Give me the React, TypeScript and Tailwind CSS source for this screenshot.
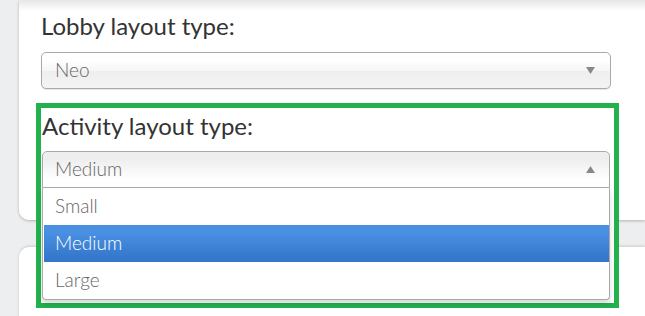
import React from 'react'

type Opt = { label: string; active?: boolean }

const OPTIONS: Opt[] = [{ label: 'Small' }, { label: 'Medium', active: true }, { label: 'Large' }]

function Caret({ up }: { up?: boolean }) {
  return (
    <svg width="9" height="7" viewBox="0 0 9 7" className="shrink-0">
      <polygon points={up ? '0,7 9,7 4.5,0' : '0,0 9,0 4.5,7'} fill="#888" />
    </svg>
  )
}

export default function App() {
  return (
    <div className="h-[316px] w-[645px] overflow-hidden bg-[#eceeef] font-['Lato','Open_Sans',sans-serif]">
      <div className="ml-[19px] h-[220px] rounded-bl-[10px] bg-[linear-gradient(#e6e6e6,#fff_11px)] pl-[22px] pt-[12px] shadow-[0_1px_3px_rgba(0,0,0,0.25)]">
        <div className="text-[24px] leading-[28px] text-[#333]">Lobby layout type:</div>

        <div className="mt-[12px] flex h-[37px] w-[570px] items-center justify-between rounded-[5px] border border-[#aaa] bg-[linear-gradient(#fff_20%,#f6f6f6_50%,#eee_52%,#f4f4f4_100%)] pl-[13px] pr-[15px] shadow-[0_1px_1px_rgba(0,0,0,0.1)]">
          <span className="text-[19px] font-light text-[#666]">Neo</span>
          <Caret />
        </div>

        <div className="relative z-10 -ml-[5px] mt-[14px] h-[205px] w-[583px] border-[5px] border-[#22b14c] bg-white pl-[1px] pt-[4px]">
          <div className="text-[24px] leading-[28px] text-[#333]">Activity layout type:</div>

          <div className="mt-[11px] w-[568px]">
            <div className="flex h-[37px] items-center justify-between rounded-t-[5px] border border-[#aaa] bg-[linear-gradient(#eee_20%,#fff_80%)] pl-[12px] pr-[14px]">
              <span className="text-[19px] font-light text-[#666]">Medium</span>
              <Caret up />
            </div>
            <ul className="rounded-b-[4px] border border-t-0 border-[#aaa] bg-white pl-[1px] shadow-[0_4px_5px_rgba(0,0,0,0.15)]">
              {OPTIONS.map(o => (
                <li
                  key={o.label}
                  className={`flex h-[37px] items-center pl-[11px] text-[19px] font-light ${
                    o.active
                      ? 'bg-[linear-gradient(#4a90e2_20%,#3477cc_90%)] text-white'
                      : 'text-[#666]'
                  }`}
                >
                  {o.label}
                </li>
              ))}
            </ul>
          </div>
        </div>
      </div>

      <div className="ml-[19px] mt-[27px] h-[100px] rounded-tl-[10px] bg-white shadow-[0_-1px_3px_rgba(0,0,0,0.15)]" />
    </div>
  )
}
